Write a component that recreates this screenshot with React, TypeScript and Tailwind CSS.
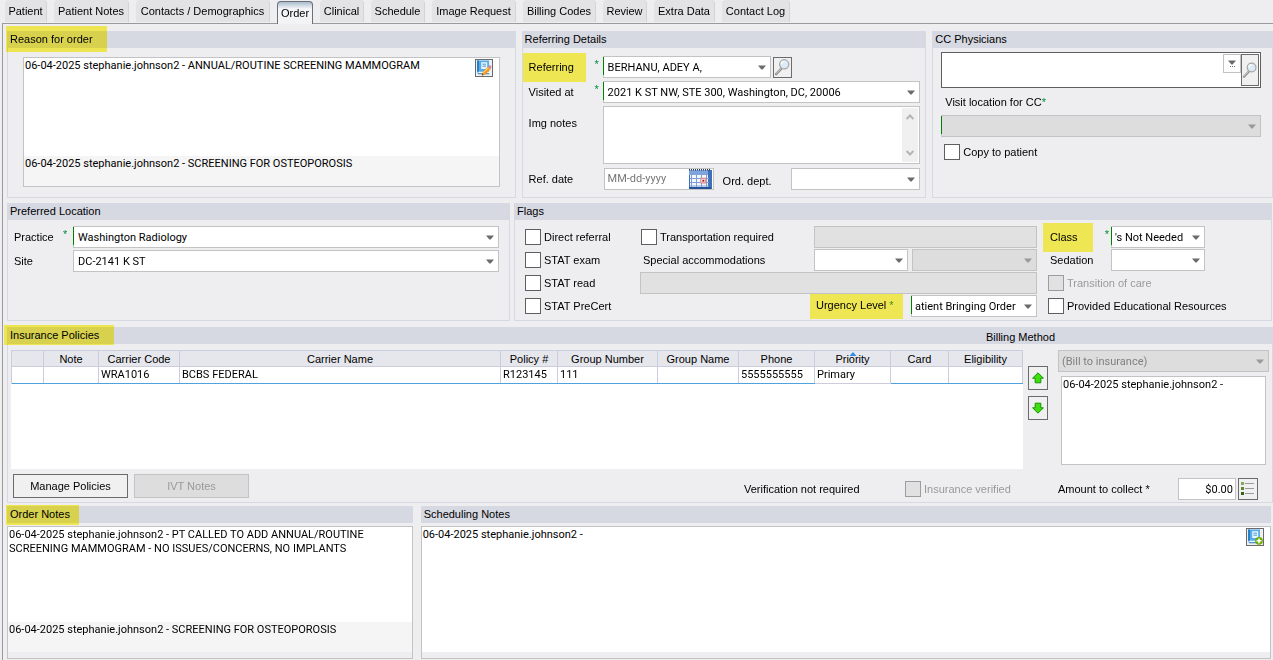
import React, { useId } from "react";

const TABS = [
  { name: "Patient", width: "w-[42px]" },
  { name: "Patient Notes", width: "w-[75px]" },
  { name: "Contacts / Demographics", width: "w-[134px]" },
  { name: "Order", width: "w-[36px]" },
  { name: "Clinical", width: "w-[44px]" },
  { name: "Schedule", width: "w-[54px]" },
  { name: "Image Request", width: "w-[84px]" },
  { name: "Billing Codes", width: "w-[73px]" },
  { name: "Review", width: "w-[44px]" },
  { name: "Extra Data", width: "w-[61px]" },
  { name: "Contact Log", width: "w-[68px]" },
];

const COLUMNS = [
  { name: "", width: "w-[32px]" },
  { name: "Note", width: "w-[55px]" },
  { name: "Carrier Code", width: "w-[81px]" },
  { name: "Carrier Name", width: "" },
  { name: "Policy #", width: "w-[57px]" },
  { name: "Group Number", width: "w-[100px]" },
  { name: "Group Name", width: "w-[81px]" },
  { name: "Phone", width: "w-[76px]" },
  { name: "Priority", width: "w-[76px]" },
  { name: "Card", width: "w-[58px]" },
  { name: "Eligibility", width: "w-[74px]" },
];

const POLICY = ["", "", "WRA1016", "BCBS FEDERAL", "R123145", "111", "", "5555555555", "Primary", "", ""];

const DATA_FONT = "font-[Roboto,'Liberation_Sans',sans-serif]";

function Arrow({ muted = false }: { muted?: boolean }) {
  return (
    <svg viewBox="0 0 8 5" className={`h-[5px] w-2 ${muted ? "fill-[#9a9a9a]" : "fill-[#6b6b6b]"}`} aria-hidden="true">
      <path d="M0 0.5h8L4.6 4.6h-1.2z" />
    </svg>
  );
}

function Select({
  id,
  label,
  value = "",
  disabled = false,
  required = false,
  className = "",
  pad = "pl-1",
}: {
  id?: string;
  label?: string;
  value?: string;
  disabled?: boolean;
  required?: boolean;
  className?: string;
  pad?: string;
}) {
  return (
    <div className={`relative h-[22px] ${className}`}>
      <select
        id={id}
        aria-label={label}
        disabled={disabled}
        className={`block h-full w-full appearance-none overflow-hidden border border-[#c3c3c3] pr-4 pt-px ${pad} ${DATA_FONT} ${
          disabled ? "bg-[#dddddd] text-[#808080] opacity-100" : "bg-white text-black"
        }`}
      >
        <option>{value}</option>
      </select>
      {required && <span className="absolute left-0 top-px h-[18px] w-px bg-[#008000]" />}
      <span className="pointer-events-none absolute right-[5px] top-[9px]">
        <Arrow muted={disabled} />
      </span>
    </div>
  );
}

function Check({ label, disabled = false }: { label: string; disabled?: boolean }) {
  const id = useId();
  return (
    <div className="flex h-[22px] items-center gap-[3px]">
      <input
        id={id}
        type="checkbox"
        disabled={disabled}
        className={`size-4 shrink-0 appearance-none border checked:bg-[#5a5a5a] ${
          disabled ? "border-[#9d9d9d] bg-[#e1e1e1]" : "border-[#5f5f5f] bg-white"
        }`}
      />
      <label htmlFor={id} className={`whitespace-nowrap ${disabled ? "text-[#9a9a9a]" : ""}`}>
        {label}
      </label>
    </div>
  );
}

function Panel({
  title,
  mark,
  aside,
  children,
  bodyClass = "",
}: {
  title: string;
  mark?: string;
  aside?: string;
  children: React.ReactNode;
  bodyClass?: string;
}) {
  return (
    <section className="flex min-w-0 flex-col">
      <header className="relative flex h-4 items-center bg-[#d7d9e2] px-[3px]">
        <h2 className="whitespace-nowrap">{title}</h2>
        {aside && <span className="ml-auto mr-[215px] whitespace-nowrap pt-[3px]">{aside}</span>}
        {mark && <span className={`absolute mix-blend-multiply bg-[#fff658] ${mark}`} />}
      </header>
      <div className={`grow border border-[#d7d9e2] ${bodyClass}`}>{children}</div>
    </section>
  );
}

function Star() {
  return <span className="h-4 leading-[11px] text-[#008a3c]">*</span>;
}

function Magnifier() {
  return (
    <svg viewBox="0 0 18 20" className="h-5 w-[18px]" aria-hidden="true">
      <path d="M7.5 12 2.2 17.6" stroke="#8d8d8d" strokeWidth="2.6" strokeLinecap="round" />
      <path d="M7.3 11.8 2.4 17" stroke="#d9d9d9" strokeWidth="1" strokeLinecap="round" />
      <circle cx="10.8" cy="7.2" r="4.9" fill="#dcebf6" stroke="#a5a5a5" strokeWidth="1.3" />
      <path d="M8 7a3 3 0 0 1 3-3" fill="none" stroke="#fff" strokeWidth="1.4" />
    </svg>
  );
}

function Notebook({ kind }: { kind: "edit" | "add" }) {
  return (
    <svg viewBox="0 0 16 16" className="size-4" aria-hidden="true">
      <path d="M1 .5h12v13H2.5L1 12z" fill="#55acea" />
      <path d="M1 .5h2v11.2H1z" fill="#2b7fc4" />
      <path d="M2 11.8h11v1.4H2.8z" fill="#f4f8fb" />
      <path d="M1.3 13.2h12v1.1H2.4z" fill="#2b7fc4" />
      <path d="M5.2 2.2h6v6.8h-6z" fill="#eaf5fd" />
      <path d="M6.4 4.2h3.6M6.4 6.2h3.6" stroke="#4a98cf" strokeWidth="1" />
      {kind === "edit" ? (
        <g>
          <path d="m5.8 15.4 1-3.6 5-5 2.6 2.6-5 5z" fill="#f39a1f" />
          <path d="m7.4 12.6 5-5" stroke="#ffcf6b" strokeWidth="1.2" />
          <path d="m11.8 6.8 1.4-1.4q1-.6 1.9.4.8.9.1 1.9l-.8 1.7z" fill="#c98bab" />
          <path d="m5.8 15.4.5-1.8 1.4 1.3z" fill="#5a3a12" />
        </g>
      ) : (
        <g>
          <circle cx="12" cy="11.8" r="3.9" fill="#6fae0c" />
          <path d="M12 9.4v4.8M9.6 11.8h4.8" stroke="#fff" strokeWidth="1.5" />
        </g>
      )}
    </svg>
  );
}

function Calendar() {
  return (
    <svg viewBox="0 0 23 20" className="h-5 w-[23px]" aria-hidden="true">
      <path d="M0 1h23v19H0z" fill="#3f70bb" />
      <path d="M0 1h19v5H0z" fill="#7fa5dc" />
      <path d="M0 .7h22" stroke="#22355a" strokeWidth="1.4" strokeDasharray="1 1" />
      <path d="M1 6h18v12H1z" fill="#f3f7fd" />
      <path d="M0 19h22" stroke="#1e4b93" strokeWidth="1.6" />
      <path d="M1 9.5h19M1 13.5h19M1 17h19M2.5 5v13M7.5 5v13M12.5 5v13M17.5 5v13" stroke="#7d9fd4" strokeWidth="1" />
      <path d="M11.8 9.3h5v4.6h-5z" fill="#fff" stroke="#d98a8f" strokeWidth="1.2" />
      <path d="M13.4 10.7h2v2h-2z" fill="#a01820" />
    </svg>
  );
}

function MoveArrow({ down = false }: { down?: boolean }) {
  return (
    <svg viewBox="0 0 12 12" className={`size-3 ${down ? "rotate-180" : ""}`} aria-hidden="true">
      <path d="M6 .8 11.4 6.2H8.8v4.6H3.2V6.2H.6z" fill="#3ee00c" stroke="#159208" strokeWidth="1" strokeLinejoin="round" />
    </svg>
  );
}

const ICON_BUTTON = "flex items-center justify-center overflow-hidden border border-[#6b6b6b] bg-[#f0f0f0]";

export default function App() {
  return (
    <div className="flex min-h-screen flex-col bg-[#eeeef0] font-['Liberation_Sans',Arial,sans-serif] text-[11px] leading-[14px] text-black">
      <nav className="flex h-[23px] gap-[7px] pl-[5px]" role="tablist">
        {TABS.map((t) =>
          t.name === "Order" ? (
            <button
              key={t.name}
              role="tab"
              aria-selected="true"
              className={`relative mt-px h-[23px] shrink-0 whitespace-nowrap rounded-t border border-b-0 border-[#6d7078] bg-linear-to-b from-[#a9bccd] via-[#f4f5f7] via-30% to-[#f3f3f4] ${t.width}`}
            >
              {t.name}
            </button>
          ) : (
            <button
              key={t.name}
              role="tab"
              aria-selected="false"
              className={`h-[22px] shrink-0 whitespace-nowrap rounded-t border-r border-[#d3d3d6] bg-[#e3e3e5] ${t.width}`}
            >
              {t.name}
            </button>
          ),
        )}
      </nav>

      <main className="ml-[2px] flex grow flex-col border-l border-t border-[#9a9a9a] pl-1 pt-[7px]">
        <div className="grid grid-cols-[509fr_405fr_341fr] gap-[6px]">
          <Panel title="Reason for order" mark="-left-px -top-[5px] h-[26px] w-[101px]" bodyClass="px-[15px] pb-[10px] pt-[9px]">
            <div className={`relative border border-[#c3c3c3] bg-white ${DATA_FONT}`}>
              <p className="h-[98px] px-px pt-px">06-04-2025 stephanie.johnson2 - ANNUAL/ROUTINE SCREENING MAMMOGRAM</p>
              <p className="h-[30px] bg-[#f5f5f5] px-px pt-px">06-04-2025 stephanie.johnson2 - SCREENING FOR OSTEOPOROSIS</p>
              <button aria-label="Edit reason" className={`absolute right-[6px] top-px size-[18px] ${ICON_BUTTON}`}>
                <Notebook kind="edit" />
              </button>
            </div>
          </Panel>

          <Panel title="Referring Details" bodyClass="flex flex-col gap-[3px] pb-[7px] pr-[5px] pt-2">
            <div className="flex h-[22px] items-center">
              <label htmlFor="referring" className="-my-1 flex h-[29px] w-[63px] items-center bg-[#eee653] pl-[6px]">
                Referring
              </label>
              <span className="flex w-[17px] justify-center pl-[5px]"><Star /></span>
              <Select id="referring" value="BERHANU, ADEY A," required className="w-[168px]" />
              <button aria-label="Find physician" className={`ml-[2px] h-[21px] w-[19px] ${ICON_BUTTON}`}>
                <Magnifier />
              </button>
            </div>
            <div className="flex h-[22px] items-center">
              <label htmlFor="visited" className="w-[63px] pl-[6px]">Visited at</label>
              <span className="flex w-[17px] justify-center pl-[5px]"><Star /></span>
              <Select id="visited" value="2021 K ST NW, STE 300, Washington, DC, 20006" required className="grow" />
            </div>
            <div className="flex">
              <label htmlFor="img-notes" className="w-20 pl-[6px] pt-[10px]">Img notes</label>
              <div className="relative h-[58px] grow">
                <textarea id="img-notes" className="block h-full w-full resize-none overflow-hidden border border-[#c3c3c3] bg-white p-1" />
                <span className="absolute bottom-[2px] right-[2px] top-[2px] flex w-4 flex-col items-center justify-between bg-[#f0f0f0] py-[6px]">
                  <svg viewBox="0 0 8 6" className="h-[6px] w-2" aria-hidden="true">
                    <path d="M.6 5 4 1.5 7.4 5" fill="none" stroke="#b4b4b4" strokeWidth="2" />
                  </svg>
                  <svg viewBox="0 0 8 6" className="h-[6px] w-2" aria-hidden="true">
                    <path d="M.6 1 4 4.5 7.4 1" fill="none" stroke="#b4b4b4" strokeWidth="2" />
                  </svg>
                </span>
              </div>
            </div>
            <div className="mt-px flex h-[22px] items-center">
              <label htmlFor="ref-date" className="w-[81px] pl-[6px]">Ref. date</label>
              <div className="flex h-[22px] w-[110px] border border-[#c3c3c3] bg-white pr-px">
                <input
                  id="ref-date"
                  placeholder="MM-dd-yyyy"
                  className={`w-[84px] min-w-0 bg-transparent pl-[3px] placeholder:text-[#777777] ${DATA_FONT}`}
                />
                <button aria-label="Open calendar"><Calendar /></button>
              </div>
              <label htmlFor="ord-dept" className="w-[77px] pl-[9px] pt-[3px]">Ord. dept.</label>
              <Select id="ord-dept" className="grow" />
            </div>
          </Panel>

          <Panel title="CC Physicians" bodyClass="pl-2 pr-[11px] pt-1">
            <div className="flex h-9 border border-[#5f5f5f] bg-white p-px">
              <input aria-label="CC physicians" className="min-w-0 grow bg-transparent px-1" />
              <button aria-label="Show list" className="flex h-[19px] w-[18px] flex-col items-center justify-center gap-px border border-[#c3c3c3] bg-white">
                <Arrow />
                <svg viewBox="0 0 5 1" className="h-px w-[5px] fill-[#6b6b6b]" aria-hidden="true">
                  <path d="M0 0h1v1H0zM2 0h1v1H2zM4 0h1v1H4z" />
                </svg>
              </button>
              <button aria-label="Find CC physician" className={`h-8 w-[18px] ${ICON_BUTTON}`}>
                <Magnifier />
              </button>
            </div>
            <label htmlFor="cc-location" className="block px-1 pb-[6px] pt-[7px]">
              Visit location for CC<span className="text-[#008a3c]">*</span>
            </label>
            <Select id="cc-location" disabled required />
            <div className="pl-[3px] pt-1"><Check label="Copy to patient" /></div>
          </Panel>
        </div>

        <div className="mt-[5px] grid grid-cols-[503fr_758fr] gap-1 pr-px">
          <Panel title="Preferred Location" bodyClass="flex flex-col gap-[2px] pl-[6px] pr-[10px] pt-[6px]">
            <div className="flex items-center">
              <label htmlFor="practice" className="w-12">Practice</label>
              <span className="flex w-[11px] pl-px"><Star /></span>
              <Select id="practice" value="Washington Radiology" required className="grow" />
            </div>
            <div className="flex items-center">
              <label htmlFor="site" className="w-[59px]">Site</label>
              <Select id="site" value="DC-2141 K ST" className="grow" />
            </div>
          </Panel>

          <Panel title="Flags" bodyClass="flex pb-[3px] pl-[10px] pt-[6px]">
            <div className="flex w-[115px] flex-col gap-px">
              <Check label="Direct referral" />
              <Check label="STAT exam" />
              <Check label="STAT read" />
              <Check label="STAT PreCert" />
            </div>
            <div className="flex grow flex-col gap-px">
              <div className="flex">
                <div className="w-[174px] pl-px"><Check label="Transportation required" /></div>
                <input aria-label="Transportation details" disabled className="h-[22px] min-w-0 grow border border-[#c3c3c3] bg-[#e1e1e1]" />
              </div>
              <div className="flex items-center">
                <label htmlFor="special" className="w-[174px] pl-[3px]">Special accommodations</label>
                <Select id="special" className="w-[94px]" />
                <Select label="Accommodation detail" disabled className="ml-1 grow" />
              </div>
              <input aria-label="Accommodation notes" disabled className="h-[22px] border border-[#c3c3c3] bg-[#e1e1e1]" />
              <div className="flex items-center justify-end">
                <label htmlFor="urgency" className="-my-[2px] mr-2 flex h-[25px] w-[93px] gap-[3px] whitespace-nowrap bg-[#eee653] pl-[6px] pt-1">
                  Urgency Level<span className="text-[#4a8a1c]">*</span>
                </label>
                <Select id="urgency" value="atient Bringing Order" required className="w-[126px]" pad="pl-[3px]" />
              </div>
            </div>
            <div className="flex w-[234px] flex-col gap-px pl-[6px]">
              <div className="flex items-center">
                <label htmlFor="class" className="-my-1 flex h-[29px] w-[50px] items-center bg-[#eee653] pl-[7px]">Class</label>
                <span className="flex w-[18px] justify-end pr-[2px]"><Star /></span>
                <Select id="class" value="'s Not Needed" required className="w-[94px]" pad="pl-[3px]" />
              </div>
              <div className="flex items-center">
                <label htmlFor="sedation" className="w-[68px] pl-[7px]">Sedation</label>
                <Select id="sedation" className="w-[94px]" />
              </div>
              <div className="pl-[5px]"><Check label="Transition of care" disabled /></div>
              <div className="pl-[5px]"><Check label="Provided Educational Resources" /></div>
            </div>
          </Panel>
        </div>

        <div className="mt-[6px] grid">
          <Panel title="Insurance Policies" aside="Billing Method" mark="-left-[3px] -top-[2px] h-5 w-[110px]" bodyClass="px-[3px] pb-px pt-[6px]">
            <div className="flex">
              <div className="h-[119px] min-w-0 grow bg-white">
                <table className="w-full table-fixed border-separate border-spacing-0 border-l border-t border-[#cccddc]">
                  <thead>
                    <tr className="h-4">
                      {COLUMNS.map((c) => (
                        <th
                          key={c.name}
                          className={`relative h-[15px] whitespace-nowrap border-b border-r border-[#cccddc] bg-[#e6e7ec] p-0 font-normal leading-[14px] ${c.width}`}
                        >
                          {c.name}
                          {c.name === "Priority" && (
                            <svg viewBox="0 0 7 4" className="absolute left-1/2 top-px h-1 w-[7px] -translate-x-1/2 fill-[#2f8fe8]" aria-hidden="true">
                              <path d="M3.5 0 7 4H0z" />
                            </svg>
                          )}
                        </th>
                      ))}
                    </tr>
                  </thead>
                  <tbody>
                    <tr>
                      {POLICY.map((v, i) => (
                        <td key={i} className={`h-4 whitespace-nowrap border-r border-[#cccddc] py-0 pl-[2px] pr-0 ${DATA_FONT}`}>
                          {v}
                        </td>
                      ))}
                    </tr>
                    <tr>
                      {POLICY.map((v, i) => (
                        <td key={i} className={`h-px p-0 ${v === "Primary" ? "bg-[#cccddc]" : "bg-[#4fa3dc]"}`} />
                      ))}
                    </tr>
                  </tbody>
                </table>
              </div>
              <div className="flex w-[35px] shrink-0 flex-col gap-[6px] pl-[5px] pt-4">
                <button aria-label="Move up" className={`h-6 w-5 ${ICON_BUTTON}`}><MoveArrow /></button>
                <button aria-label="Move down" className={`h-6 w-5 ${ICON_BUTTON}`}><MoveArrow down /></button>
              </div>
              <div className="w-[211px] shrink-0">
                <Select label="Billing method" value="(Bill to insurance)" disabled pad="pl-[3px]" />
                <div className={`mx-[3px] mt-1 h-[89px] border border-[#c3c3c3] bg-white px-px pt-px ${DATA_FONT}`}>
                  06-04-2025 stephanie.johnson2 -
                </div>
              </div>
            </div>
            <div className="flex h-8 items-start pl-[2px] pt-[5px]">
              <button className="h-6 w-[115px] border border-[#6b6b6b] bg-[#f0f0f0]">Manage Policies</button>
              <button disabled className="ml-[6px] h-6 w-[115px] border border-[#c3c3c3] bg-[#dddddd] text-[#9a9a9a]">IVT Notes</button>
              <div className="ml-auto flex items-center pt-1">
                <span className="w-[161px]">Verification not required</span>
                <div className="w-[153px]"><Check label="Insurance verified" disabled /></div>
                <label htmlFor="amount" className="w-[120px]">Amount to collect *</label>
                <input id="amount" defaultValue="$0.00" className={`h-[22px] w-[58px] border border-[#c3c3c3] bg-white pr-[2px] text-right ${DATA_FONT}`} />
                <button aria-label="Amount list" className={`ml-[2px] mr-[11px] h-[22px] w-5 ${ICON_BUTTON}`}>
                  <svg viewBox="0 0 14 14" className="size-[14px]" aria-hidden="true">
                    <path d="M0 0h3v3H0z" fill="#87a85a" />
                    <path d="M0 5h3v3H0z" fill="#5f8a2a" />
                    <path d="M0 10h3v3H0z" fill="#3f5f14" />
                    <path d="M4 1.5h9M4 6.5h9M4 11.5h9" stroke="#9a9a9a" strokeWidth="1" />
                  </svg>
                </button>
              </div>
            </div>
          </Panel>
        </div>

        <div className="mt-[3px] grid grow grid-cols-[406fr_851fr] gap-2 pb-px pr-[2px]">
          <Panel title="Order Notes" mark="-left-px -top-px h-5 w-[73px]" bodyClass="flex flex-col border-b-0 border-x-0 pt-[3px]">
            <div className={`flex grow flex-col border border-[#c3c3c3] pb-[6px] ${DATA_FONT}`}>
              <p className="grow bg-white pl-px pr-10 pt-px">
                06-04-2025 stephanie.johnson2 - PT CALLED TO ADD ANNUAL/ROUTINE SCREENING MAMMOGRAM - NO ISSUES/CONCERNS, NO
                IMPLANTS
              </p>
              <p className="h-[30px] bg-[#f5f5f5] pl-px pt-px">06-04-2025 stephanie.johnson2 - SCREENING FOR OSTEOPOROSIS</p>
            </div>
          </Panel>
          <Panel title="Scheduling Notes" bodyClass="flex flex-col border-b-0 border-x-0 pt-[3px]">
            <div className={`relative flex grow flex-col border border-[#c3c3c3] pb-[6px] ${DATA_FONT}`}>
              <p className="grow bg-white pl-px pt-px">06-04-2025 stephanie.johnson2 -</p>
              <button aria-label="Add note" className={`absolute right-[6px] top-px size-[18px] ${ICON_BUTTON}`}>
                <Notebook kind="add" />
              </button>
            </div>
          </Panel>
        </div>
      </main>
    </div>
  );
}
